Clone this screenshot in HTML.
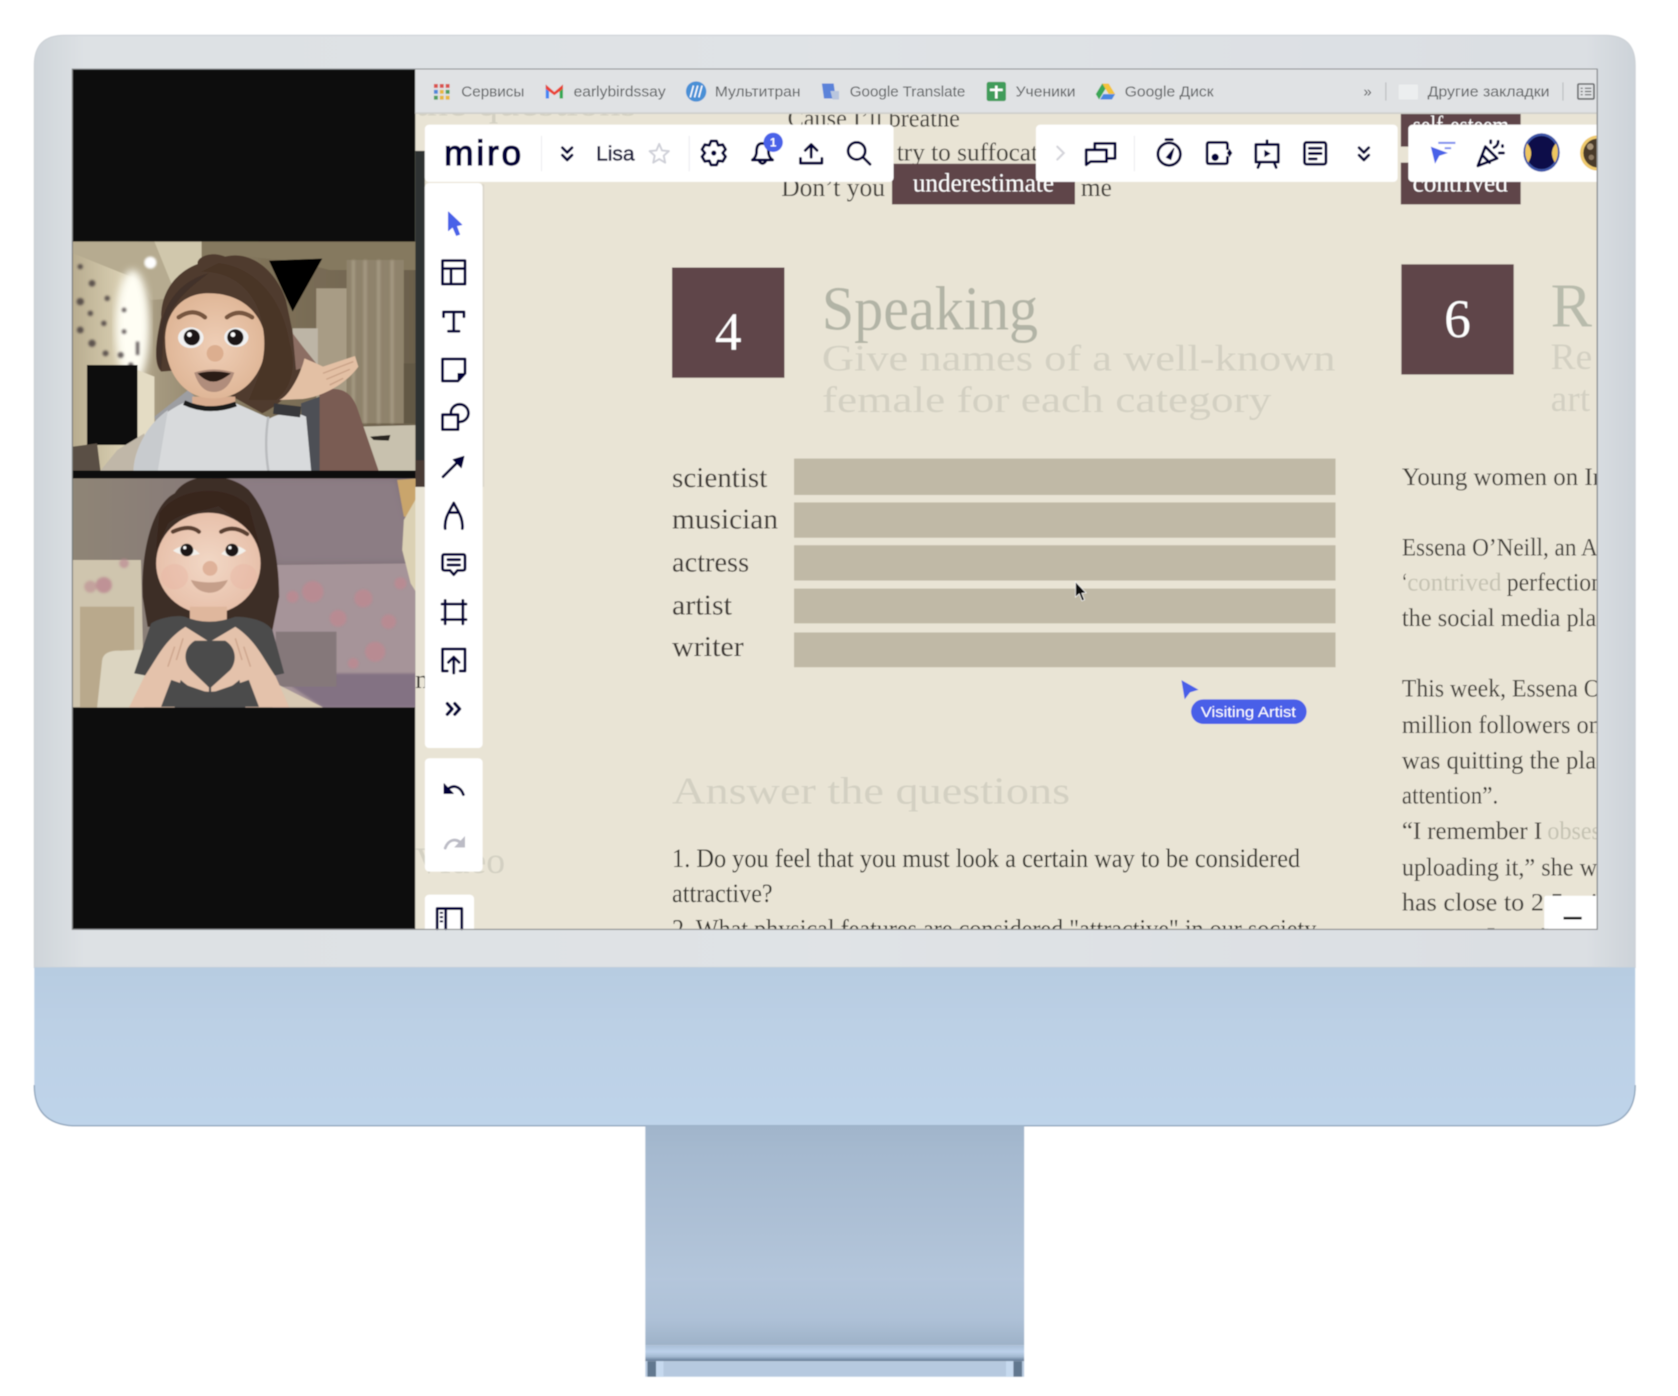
<!DOCTYPE html>
<html lang="en"><head><meta charset="utf-8"><title>Miro lesson on iMac</title>
<style>
html,body{margin:0;padding:0;background:#fff;width:1678px;height:1396px;overflow:hidden}
svg{display:block}
.s{font-family:"Liberation Serif",serif}
.a{font-family:"Liberation Sans","Noto Sans CJK SC",sans-serif}
.bm{font-size:14px;fill:#5c5e60}
.lab{font-size:27px;fill:#3c3934}
.body{font-size:24px;fill:#403d38}
.hl{font-size:35px;fill:#d3d0c2}
.ic{fill:none;stroke:#050038;stroke-width:2.6;stroke-linecap:round;stroke-linejoin:round}
</style></head><body>
<svg xmlns="http://www.w3.org/2000/svg" width="1678" height="1396" viewBox="0 0 1568 1304.5">
<defs>
<linearGradient id="bez" x1="0" x2="1" y1="0" y2="0"><stop offset="0" stop-color="#cfd5da"/><stop offset=".03" stop-color="#dde1e4"/><stop offset=".5" stop-color="#e0e3e6"/><stop offset=".97" stop-color="#dbdfe3"/><stop offset="1" stop-color="#cdd3d9"/></linearGradient>
<linearGradient id="chin" x1="0" x2="0" y1="0" y2="1"><stop offset="0" stop-color="#b7cce1"/><stop offset=".35" stop-color="#bcd0e5"/><stop offset="1" stop-color="#bfd4ea"/></linearGradient>
<linearGradient id="stand" x1="0" x2="0" y1="0" y2="1"><stop offset="0" stop-color="#a1b5cb"/><stop offset=".1" stop-color="#a5b9cf"/><stop offset=".7" stop-color="#b4c6db"/><stop offset=".88" stop-color="#aec1d7"/><stop offset="1" stop-color="#9eb2c8"/></linearGradient>
<linearGradient id="foot" x1="0" x2="0" y1="0" y2="1"><stop offset="0" stop-color="#a9bed6"/><stop offset=".4" stop-color="#bcd1ea"/><stop offset=".7" stop-color="#a5bbd3"/><stop offset="1" stop-color="#5f7690"/></linearGradient>
<linearGradient id="wall" x1="0" x2="1" y1="0" y2="0"><stop offset="0" stop-color="#b9ad90"/><stop offset=".14" stop-color="#d9cfb2"/><stop offset=".24" stop-color="#a69a80"/><stop offset=".55" stop-color="#7f7259"/><stop offset="1" stop-color="#6b5f4c"/></linearGradient>
<linearGradient id="wp2" x1="0" x2="1" y1="0" y2="0"><stop offset="0" stop-color="#8f8576"/><stop offset=".5" stop-color="#85777a"/><stop offset="1" stop-color="#7b6c76"/></linearGradient>
<radialGradient id="skin"><stop offset="0" stop-color="#efcfb7"/><stop offset="1" stop-color="#e0b798"/></radialGradient>
<radialGradient id="skin2"><stop offset="0" stop-color="#f2d8c6"/><stop offset="1" stop-color="#e8c1ab"/></radialGradient>
<filter id="b1"><feGaussianBlur stdDeviation="3"/></filter>
<filter id="b2"><feGaussianBlur stdDeviation="12"/></filter>
<filter id="soft" x="0" y="0" width="100%" height="100%"><feGaussianBlur stdDeviation=".45"/></filter>
<clipPath id="cv"><rect x="388" y="106" width="1104" height="762"/></clipPath>
<clipPath id="av"><rect x="1316" y="116" width="176" height="54"/></clipPath>
<clipPath id="v1"><rect x="38" y="35" width="1016" height="687"/></clipPath>
<clipPath id="v2"><rect x="38" y="745" width="1016" height="687"/></clipPath>
</defs>
<g filter="url(#soft)">
<rect width="1568" height="1304.5" fill="#fff"/>
<!-- monitor -->
<path d="M60 33H1500Q1528 33 1528 61V904H32V61Q32 33 60 33Z" fill="url(#bez)" stroke="#cdd2d7" stroke-width="1"/>
<path d="M32 904H1528V1014Q1528 1050 1492 1052H68Q32 1050 32 1014Z" fill="url(#chin)"/>
<path d="M32 1014Q32 1050 68 1052H1492Q1528 1050 1528 1014" fill="none" stroke="#93a8bf" stroke-width="1.3"/>
<rect x="603" y="1052" width="354" height="205" fill="url(#stand)"/>
<rect x="603" y="1257" width="354" height="15" fill="url(#foot)"/>
<rect x="603" y="1272" width="354" height="14.5" fill="#b6c9df"/>
<rect x="605" y="1272" width="8" height="14.5" fill="#62788f"/><rect x="613" y="1272" width="7" height="14.5" fill="#c6d9ee"/>
<rect x="940" y="1272" width="7" height="14.5" fill="#c6d9ee"/><rect x="947" y="1272" width="8" height="14.5" fill="#62788f"/>

<!-- screen -->
<rect x="67.5" y="64.5" width="1425" height="804" fill="#e9e4d5" stroke="#8a8d90" stroke-width="1"/>
<rect x="68" y="65" width="320" height="803" fill="#111"/>
<rect x="388" y="141" width="9" height="314" fill="#2f3130"/>
<rect x="388" y="430" width="9" height="25" fill="#4a3a34"/>

<!-- videos -->
<g transform="translate(56.06 214.9) scale(.315 .3115)">
<g clip-path="url(#v1)">
<rect x="38" y="35" width="1027" height="687" fill="url(#wall)"/>
<path d="M420 35H1065V120H800L700 95 560 80 420 120Z" fill="#85795f"/>
<path d="M38 35H280L420 100 400 200 270 210 235 150 38 70Z" fill="#b6ab90"/>
<path d="M280 35H420V110L330 160Z" fill="#d0c7ac"/>
<ellipse cx="215" cy="290" rx="50" ry="170" fill="#fffef4" filter="url(#b2)"/>
<circle cx="268" cy="98" r="18" fill="#fff" filter="url(#b1)"/>
<path d="M620 92L778 86 690 245Z" fill="#030303"/>
<rect x="760" y="175" width="90" height="330" fill="#a89c85"/>
<rect x="850" y="90" width="170" height="490" fill="#8f836c"/>
<g stroke="#a59a83" stroke-width="10" filter="url(#b1)"><path d="M870 90V580M905 90V580M945 90V580M985 90V580"/></g>
<rect x="1020" y="400" width="45" height="180" fill="#625845"/>
<rect x="690" y="295" width="75" height="120" fill="#bdb5a6"/>
<path d="M885 590L1065 585V722H900Z" fill="#c8c1ae"/>
<path d="M920 620L980 615 975 632 930 630Z" fill="#2a2622"/>
<g fill="#3a3034" filter="url(#b1)" opacity=".75">
<circle cx="60" cy="110" r="8"/><circle cx="95" cy="160" r="10"/><circle cx="140" cy="205" r="8"/><circle cx="190" cy="240" r="7"/><circle cx="60" cy="215" r="11"/><circle cx="90" cy="250" r="8"/><circle cx="130" cy="280" r="8"/><circle cx="190" cy="305" r="7"/><circle cx="60" cy="300" r="10"/><circle cx="95" cy="340" r="11"/><circle cx="135" cy="370" r="9"/><circle cx="180" cy="375" r="9"/><rect x="225" y="335" width="10" height="40"/><circle cx="210" cy="405" r="8"/>
</g>
<rect x="80" y="405" width="150" height="240" fill="#0f0d0f"/>
<path d="M230 420L280 440V620L230 640Z" fill="#e4dcc4"/>
<path d="M38 650L110 640 120 722H38Z" fill="#5a5045"/>
<path d="M120 722L170 660 250 610 260 722Z" fill="#c0b7a8"/>
<path d="M280 560L380 480 420 520 300 640Z" fill="#9d9ea2"/>
<path d="M770 480C830 470 860 480 880 530L945 722H760Z" fill="#7a5c52"/>
<path d="M715 520L770 500 770 722 720 722Z" fill="#4d4f55"/>
<path d="M300 262C300 170 360 120 408 102C405 80 450 62 490 80C565 60 640 120 670 210C680 260 690 300 700 360C725 400 712 450 690 480C660 510 640 530 600 550L530 510 360 420 300 425C275 400 285 330 300 262Z" fill="#4f3a2d"/>
<path d="M690 310L720 350 760 400 700 420Z" fill="#8c6e63"/>
<path d="M392 500H520V540H392Z" fill="#d9ad90"/>
<path d="M218 722C222 640 275 560 368 518Q440 545 522 520L622 565C660 545 700 545 730 560L745 722Z" fill="#d8dadc"/>
<path d="M218 722C225 640 265 580 320 540L290 722Z" fill="#c8cbce"/>
<path d="M618 560Q605 640 618 722" stroke="#b9bbbe" stroke-width="7" fill="none"/>
<path d="M368 518Q440 552 522 522" fill="none" stroke="#1a1a1c" stroke-width="15"/>
<path d="M635 520L715 530 712 562 632 552Z" fill="#38393b"/>
<path d="M312 330C312 250 360 190 440 190C540 190 600 250 610 330C612 430 540 510 450 505C370 505 312 430 312 330Z" fill="url(#skin)"/>
<path d="M420 125C520 125 590 190 603 300C615 380 590 440 560 510L640 510C690 470 700 400 680 340C660 200 570 110 470 100Z" fill="#4a3528"/>
<path d="M300 280C320 200 370 150 440 130C390 170 330 210 308 300L300 420C280 390 285 340 300 280Z" fill="#42302a"/>
<path d="M352 262Q395 232 430 262" fill="none" stroke="#77573f" stroke-width="13" stroke-linecap="round"/>
<path d="M495 262Q530 235 570 262" fill="none" stroke="#77573f" stroke-width="13" stroke-linecap="round"/>
<ellipse cx="388" cy="323" rx="38" ry="31" fill="#f1f1f1"/><ellipse cx="523" cy="322" rx="36" ry="29" fill="#f1f1f1"/>
<circle cx="391" cy="322" r="24" fill="#1b1513"/><circle cx="520" cy="322" r="24" fill="#1b1513"/>
<circle cx="384" cy="314" r="7" fill="#fff"/><circle cx="513" cy="314" r="7" fill="#fff"/>
<circle cx="460" cy="370" r="25" fill="#dcae8f"/>
<path d="M398 428Q455 408 517 428Q498 487 455 486Q416 486 398 428Z" fill="#b08d7b"/>
<path d="M408 430Q455 418 507 430Q475 455 455 455Q432 455 408 430Z" fill="#2a1c18"/>
<path d="M650 510C680 500 715 430 725 385L760 400 780 410 875 378 885 410C850 460 780 500 720 507Z" fill="#e3c0a4"/>
<g stroke="#c9a287" stroke-width="4" fill="none"><path d="M780 430L870 395M790 448L860 418M800 465L840 445"/></g>
</g>
<rect x="38" y="722" width="1016" height="23" fill="#111"/>
<g clip-path="url(#v2)">
<rect x="38" y="745" width="1027" height="687" fill="url(#wp2)"/>
<path d="M500 745H1000L1065 1000H640Z" fill="#8c7d84" filter="url(#b2)"/>
<path d="M38 990L240 990 250 1432H38Z" fill="#cfc5ae"/>
<path d="M630 1005L1065 1000 1065 1432H630Z" fill="#a69499"/>
<path d="M630 1330H1065V1432H780Z" fill="#6d5d76" opacity=".6" filter="url(#b1)"/>
<g fill="#bc8a92" filter="url(#b1)" opacity=".85"><circle cx="90" cy="1070" r="18" opacity=".7"/><circle cx="130" cy="1065" r="24"/><circle cx="190" cy="1000" r="14" opacity=".8"/><circle cx="750" cy="1085" r="32"/><circle cx="900" cy="1105" r="27"/><circle cx="825" cy="1165" r="25"/><circle cx="935" cy="1265" r="30"/><circle cx="975" cy="1175" r="22"/><circle cx="690" cy="1100" r="18"/><circle cx="870" cy="1300" r="16"/><circle cx="1010" cy="1060" r="18"/></g>
<path d="M1000 750L1065 745V860L1020 860Z" fill="#c9a56c"/>
<path d="M1020 870L1065 790 1065 1100 1040 1060 1015 960Z" fill="#dbd1b4"/>
<rect x="60" y="1130" width="160" height="302" fill="#b9a98c"/>
<path d="M110 1432L125 1290Q130 1260 180 1262L260 1258 300 1432Z" fill="#dcd5c1"/>
<rect x="640" y="1205" width="180" height="165" fill="#85787a"/>
<path d="M640 1360L780 1432H620Z" fill="#d8c9b3"/>
<path d="M245 1100C240 950 280 820 340 790C380 725 500 725 560 780C620 850 650 970 650 1100L630 1200 260 1190Z" fill="#3e2d25"/>
<ellipse cx="440" cy="1000" rx="155" ry="152" fill="url(#skin2)"/>
<ellipse cx="340" cy="1040" rx="40" ry="38" fill="#e9b6a3" opacity=".45"/><ellipse cx="545" cy="1040" rx="40" ry="38" fill="#e9b6a3" opacity=".45"/>
<path d="M295 850C350 770 500 760 560 830L595 960C570 890 510 860 470 828C420 845 360 845 320 880L285 960Z" fill="#37271f"/>
<rect x="385" y="1130" width="110" height="50" fill="#dfb79d"/>
<path d="M335 905Q385 882 412 905M478 905Q515 884 555 912" fill="none" stroke="#5a3f31" stroke-width="12" stroke-linecap="round"/>
<path d="M335 962Q375 930 415 972Q370 985 335 962ZM478 972Q515 930 552 962Q515 990 478 972Z" fill="#f3f1ec"/>
<circle cx="376" cy="960" r="19" fill="#1a1412"/><circle cx="510" cy="960" r="19" fill="#1a1412"/>
<circle cx="370" cy="953" r="5" fill="#fff"/><circle cx="504" cy="953" r="5" fill="#fff"/>
<circle cx="445" cy="1015" r="22" fill="#dfb29a"/>
<path d="M388 1050Q445 1065 498 1050Q480 1088 445 1088Q405 1088 388 1050Z" fill="#c59f8a"/>
<path d="M270 1180C300 1160 350 1155 370 1160Q440 1190 520 1160C560 1160 610 1170 630 1200L665 1330 600 1345 590 1432H310L300 1345 220 1330Z" fill="#4b4b4c"/>
<path d="M205 1432L250 1340C290 1280 310 1230 372 1190L438 1232 400 1232C370 1250 362 1290 388 1320L442 1372V1385C400 1385 380 1370 358 1350L340 1432Z" fill="#e4c2ab"/>
<path d="M680 1432L640 1340C600 1280 580 1230 520 1190L450 1232 490 1232C520 1250 528 1290 505 1320L448 1372V1385C490 1385 510 1370 532 1350L550 1432Z" fill="#e4c2ab"/>
<path d="M320 1430H300L330 1350 445 1390 560 1350 590 1430Z" fill="#4b4b4c"/>
<g stroke="#cda58d" stroke-width="4" fill="none"><path d="M340 1250L320 1310M365 1225L345 1290M545 1250L565 1310M520 1225L540 1290"/></g>
</g>
</g>

<!-- canvas content -->
<g clip-path="url(#cv)">
<rect x="397" y="106" width="1095" height="762" fill="#e9e4d5"/>
<rect x="388" y="455" width="9" height="413" fill="#e9e4d5"/>
<text x="595" y="108" text-anchor="end" class="s hl" textLength="207" lengthAdjust="spacingAndGlyphs">the questions</text>
<text x="736" y="118" class="s" font-size="24" fill="#403d38" textLength="161" lengthAdjust="spacingAndGlyphs">Cause I’ll breathe</text>
<text x="838" y="150" class="s" font-size="24" fill="#403d38" textLength="132" lengthAdjust="spacingAndGlyphs">try to suffocat</text>
<text x="730" y="183" class="s" font-size="25" fill="#403d38" textLength="97" lengthAdjust="spacingAndGlyphs">Don’t you</text>
<text x="1010" y="183" class="s" font-size="25" fill="#403d38" textLength="29" lengthAdjust="spacingAndGlyphs">me</text>
<rect x="833.5" y="153" width="171" height="38" fill="#5e454a"/>
<text x="853" y="179" class="s" font-size="25" fill="#fff" textLength="132" lengthAdjust="spacingAndGlyphs">underestimate</text>
<rect x="1309" y="100" width="112" height="37" fill="#5e454a"/>
<text x="1320" y="125" class="s" font-size="25" fill="#fff" textLength="90" lengthAdjust="spacingAndGlyphs">self-esteem</text>
<rect x="1309" y="152" width="112" height="39" fill="#5e454a"/>
<text x="1320" y="179" class="s" font-size="25" fill="#fff" textLength="89" lengthAdjust="spacingAndGlyphs">contrived</text>

<rect x="628" y="250" width="105" height="103" fill="#5e454a"/>
<text x="680.5" y="327" text-anchor="middle" class="s" font-size="50" fill="#fff">4</text>
<text x="768" y="308" class="s" font-size="58" fill="#b2b4a6" textLength="202" lengthAdjust="spacingAndGlyphs">Speaking</text>
<text x="768" y="346" class="s hl" textLength="480" lengthAdjust="spacingAndGlyphs">Give names of a well-known</text>
<text x="768" y="385" class="s hl" textLength="420" lengthAdjust="spacingAndGlyphs">female for each category</text>
<g fill="#c0b9a6">
<rect x="742" y="428.5" width="506" height="34"/><rect x="742" y="469.5" width="506" height="33"/><rect x="742" y="509.5" width="506" height="33"/><rect x="742" y="550" width="506" height="32.5"/><rect x="742" y="591" width="506" height="32.5"/>
</g>
<text x="628" y="455" class="s lab" textLength="89" lengthAdjust="spacingAndGlyphs">scientist</text>
<text x="628" y="494" class="s lab" textLength="99" lengthAdjust="spacingAndGlyphs">musician</text>
<text x="628" y="534" class="s lab" textLength="72" lengthAdjust="spacingAndGlyphs">actress</text>
<text x="628" y="574" class="s lab" textLength="56" lengthAdjust="spacingAndGlyphs">artist</text>
<text x="628" y="613" class="s lab" textLength="67" lengthAdjust="spacingAndGlyphs">writer</text>

<text x="628" y="751" class="s" font-size="36" fill="#d3d0c2" textLength="372" lengthAdjust="spacingAndGlyphs">Answer the questions</text>
<text x="628" y="810" class="s" font-size="25" fill="#33302b" textLength="587" lengthAdjust="spacingAndGlyphs">1. Do you feel that you must look a certain way to be considered</text>
<text x="628" y="843" class="s" font-size="25" fill="#33302b" textLength="94" lengthAdjust="spacingAndGlyphs">attractive?</text>
<text x="628" y="876" class="s" font-size="25" fill="#33302b" textLength="602" lengthAdjust="spacingAndGlyphs">2. What physical features are considered "attractive" in our society</text>

<text x="388" y="643" class="s" font-size="25" fill="#403d38">n</text>
<text x="388" y="816" class="s" font-size="35" fill="#d3d0c2" textLength="84" lengthAdjust="spacingAndGlyphs">Video</text>

<rect x="1309.5" y="247" width="105" height="103" fill="#5e454a"/>
<text x="1362" y="315" text-anchor="middle" class="s" font-size="50" fill="#fff">6</text>
<text x="1449" y="305" class="s" font-size="58" fill="#b8bbac">R</text>
<text x="1449" y="345" class="s hl">Re</text>
<text x="1449" y="384" class="s hl">art</text>
<text x="1310" y="453" class="s body" textLength="190" lengthAdjust="spacingAndGlyphs">Young women on In</text>
<text x="1310" y="519" class="s body" textLength="183" lengthAdjust="spacingAndGlyphs">Essena O’Neill, an A</text>
<text x="1310" y="552" class="s body" textLength="5" lengthAdjust="spacingAndGlyphs">‘</text>
<text x="1315" y="552" class="s body" style="fill:#c5c2b2" textLength="88" lengthAdjust="spacingAndGlyphs">contrived</text>
<text x="1408" y="552" class="s body" textLength="90" lengthAdjust="spacingAndGlyphs">perfection</text>
<text x="1310" y="585" class="s body" textLength="188" lengthAdjust="spacingAndGlyphs">the social media plat</text>
<text x="1310" y="651" class="s body" textLength="186" lengthAdjust="spacingAndGlyphs">This week, Essena O</text>
<text x="1310" y="685" class="s body" textLength="186" lengthAdjust="spacingAndGlyphs">million followers on</text>
<text x="1310" y="718" class="s body" textLength="188" lengthAdjust="spacingAndGlyphs">was quitting the plat</text>
<text x="1310" y="751" class="s body" textLength="90" lengthAdjust="spacingAndGlyphs">attention”.</text>
<text x="1310" y="784" class="s body" textLength="131" lengthAdjust="spacingAndGlyphs">“I remember I</text>
<text x="1446" y="784" class="s body" style="fill:#c5c2b2" textLength="50" lengthAdjust="spacingAndGlyphs">obses</text>
<text x="1310" y="818" class="s body" textLength="190" lengthAdjust="spacingAndGlyphs">uploading it,” she wr</text>
<text x="1310" y="851" class="s body" textLength="190" lengthAdjust="spacingAndGlyphs">has close to 2,5 mil</text>
<text x="1310" y="884" class="s body" textLength="180" lengthAdjust="spacingAndGlyphs">people that</text>

<!-- cursors -->
<path d="M1005 543.5V558L1008.5 555 1011 561.5 1013.5 560.5 1011 554.5 1015 554Z" fill="#111" stroke="#fff" stroke-width=".6"/>
<path d="M1104 635.5L1120 644.5 1112 647 1107 653.5Z" fill="#4a5fe8"/>
<rect x="1113" y="653.5" width="108" height="23" rx="11.5" fill="#4a5fe8"/>
<text x="1122" y="670" class="a" font-size="14" fill="#fff" textLength="89" lengthAdjust="spacingAndGlyphs">Visiting Artist</text>

<!-- panels -->
<g fill="#fff">
<rect x="397" y="116.5" width="438" height="53.5" rx="4"/>
<rect x="968" y="116.5" width="338" height="53.5" rx="4"/>
<rect x="1316" y="116.5" width="190" height="53.5" rx="4"/>
<rect x="450" y="172" width="2.5" height="283" fill="#dcd7ca"/>
<rect x="397" y="171" width="54" height="528" rx="4"/>
<rect x="397" y="708.5" width="54" height="106" rx="4"/>
<rect x="397" y="836" width="46" height="40" rx="4"/>
<rect x="1443" y="837" width="60" height="40" rx="2"/>
</g>
</g>

<!-- bookmarks bar -->
<rect x="388" y="65" width="1104" height="41" fill="#e0e2e4"/>
<rect x="388" y="105" width="1104" height="1.5" fill="#cfcfcb"/>
<g>
<g><rect x="405.5" y="78.5" width="3.6" height="3.6" fill="#d9534f"/><rect x="411" y="78.5" width="3.6" height="3.6" fill="#d9534f"/><rect x="416.5" y="78.5" width="3.6" height="3.6" fill="#d9534f"/><rect x="405.5" y="84" width="3.6" height="3.6" fill="#4f86d9"/><rect x="411" y="84" width="3.6" height="3.6" fill="#e8b63e"/><rect x="416.5" y="84" width="3.6" height="3.6" fill="#4f9d5f"/><rect x="405.5" y="89.5" width="3.6" height="3.6" fill="#4f9d5f"/><rect x="411" y="89.5" width="3.6" height="3.6" fill="#e8b63e"/><rect x="416.5" y="89.5" width="3.6" height="3.6" fill="#e8b63e"/></g>
<text x="431" y="90" class="a bm" textLength="59" lengthAdjust="spacingAndGlyphs">Сервисы</text>
<path d="M510 79V92H513V84Z" fill="#4285f4"/><path d="M526 79V92H523V84Z" fill="#34a853"/><path d="M510 79L518 86 526 79 526 83 518 89 510 83Z" fill="#ea4335"/>
<text x="536" y="90" class="a bm" textLength="86" lengthAdjust="spacingAndGlyphs">earlybirdssay</text>
<circle cx="650.5" cy="85.5" r="9.5" fill="#4a90d6"/><path d="M645 91L648 80M649 91L652 80M653 91L656 80" stroke="#fff" stroke-width="1.4" fill="none"/>
<text x="668" y="90" class="a bm" textLength="80" lengthAdjust="spacingAndGlyphs">Мультитран</text>
<path d="M768 78H779L781 92H770Z" fill="#5b83d9"/><path d="M776 85H784V93H778Z" fill="#b9c6de"/>
<text x="794" y="90" class="a bm" textLength="108" lengthAdjust="spacingAndGlyphs">Google Translate</text>
<rect x="922" y="76.5" width="18" height="18" rx="2" fill="#3f9c5a"/><path d="M925 84H937M931 80V92" stroke="#fff" stroke-width="2.4"/>
<text x="949" y="90" class="a bm" textLength="56" lengthAdjust="spacingAndGlyphs">Ученики</text>
<path d="M1030 78H1036L1030 88 1027 93 1024 88Z" fill="#3aa757"/><path d="M1030 78H1036L1042 88H1036Z" fill="#f3c33b"/><path d="M1028 93L1031 88H1042L1039 93Z" fill="#4a86e0"/>
<text x="1051" y="90" class="a bm" textLength="83" lengthAdjust="spacingAndGlyphs">Google Диск</text>
<text x="1274" y="90" class="a" font-size="14" fill="#55575a">»</text>
<rect x="1294.5" y="77" width="1" height="17" fill="#b9bbbd"/>
<rect x="1307" y="79" width="18" height="14" rx="1" fill="#eceeef"/>
<text x="1334" y="90" class="a bm" textLength="114" lengthAdjust="spacingAndGlyphs">Другие закладки</text>
<rect x="1460" y="77" width="1" height="17" fill="#b9bbbd"/>
<rect x="1474.5" y="78.5" width="15" height="14" rx="1" fill="none" stroke="#66686a" stroke-width="1.5"/>
<path d="M1477 82.5H1479M1481 82.5H1487M1477 85.5H1479M1481 85.5H1487M1477 88.5H1479M1481 88.5H1487" stroke="#66686a" stroke-width="1.1"/>
</g>

<!-- top toolbar -->
<text x="415" y="154" class="a" font-size="33" fill="#050038" stroke="#050038" stroke-width="1.1" textLength="72">miro</text>
<g stroke="#ececf0" stroke-width="1"><path d="M506 127V160M644 127V160M1060 127V160"/></g>
<path class="ic" d="M525.5 138L530 142.5 534.5 138M525.5 145L530 149.5 534.5 145"/>
<text x="557" y="150" class="a" font-size="19" fill="#1c1b3d" stroke="#1c1b3d" stroke-width=".5" textLength="36" lengthAdjust="spacingAndGlyphs">Lisa</text>
<path d="M616 134.5L618.6 140.6 625 141.2 620.2 145.5 621.6 152 616 148.6 610.4 152 611.8 145.5 607 141.2 613.4 140.6Z" fill="none" stroke="#cfd0d8" stroke-width="1.8" stroke-linejoin="round"/>
<path class="ic" transform="translate(667 143)" d="M-2.6-11.2L2.6-11.2 4.15-7.2 8.4-7.84 11-3.36 8.3 0 11 3.36 8.4 7.84 4.15 7.2 2.6 11.2-2.6 11.2-4.15 7.2-8.4 7.84-11 3.36-8.3 0-11-3.36-8.4-7.84-4.15-7.2Z"/><circle cx="667" cy="143" r="2.4" fill="#050038"/>
<path class="ic" d="M703 149.5Q707 147 707 141Q707 134 712.5 134Q718 134 718 141Q718 147 722 149.5ZM709 150Q712.5 155.5 716 150"/>
<circle cx="722.5" cy="133" r="9" fill="#4a62e8"/><text x="722.5" y="137" text-anchor="middle" class="a" font-size="11" font-weight="bold" fill="#fff">1</text>
<path class="ic" d="M758 147V135M752.5 140.5L758 135 763.5 140.5M748 148V152.5H768V148"/>
<circle class="ic" cx="800.5" cy="141" r="8"/><path class="ic" d="M806.5 147L813 153.5"/>
<path d="M988 137L994 143 988 149" fill="none" stroke="#d4d4da" stroke-width="2" stroke-linecap="round"/>
<path class="ic" d="M1023 139V134H1042V148H1034M1015 140H1034V151H1019L1015 154Z"/>
<circle class="ic" cx="1092.5" cy="144" r="10.5"/><path class="ic" d="M1089.5 130.5H1095.5"/><path d="M1090 147L1097 138.5 1094 149Z" fill="#050038" stroke="#050038"/>
<path class="ic" d="M1147 139V135Q1147 133 1145 133H1130Q1128 133 1128 135V151Q1128 153 1130 153H1145Q1147 153 1147 151V147"/><circle cx="1135.5" cy="147" r="3.4" fill="#050038"/><path d="M1149 139L1151.5 143 1149 147 1146.5 143Z" fill="#050038"/>
<path class="ic" d="M1173.5 135H1194.5V151.5H1173.5ZM1184 135V131.5M1177.5 151.5L1175.5 156.5M1190.5 151.5L1192.5 156.5"/><path d="M1181.5 140L1187.5 143.5 1181.5 147Z" fill="#050038"/>
<rect class="ic" x="1219" y="133" width="20" height="20.5" rx="2"/><path class="ic" d="M1223.5 138.5H1234.5M1223.5 143.5H1234.5M1223.5 148.5H1230"/>
<path class="ic" d="M1270 138L1274.5 142.5 1279 138M1270 145L1274.5 149.5 1279 145"/>
<path d="M1337 137L1353 143 1345 145.5 1341 153Z" fill="#4a62e8"/><path d="M1344 133.5H1360M1350 138.5H1356" stroke="#7a8cee" stroke-width="1.8" fill="none"/>
<path class="ic" d="M1381 155L1388 137 1399 148ZM1385 145L1392 152"/><path class="ic" d="M1396 138Q1400 136 1400 132M1401 143H1405M1393 133.5V131.5M1404 137V136"/>
<ellipse cx="1440.5" cy="142.5" rx="17" ry="18" fill="#3e55a8"/><ellipse cx="1440.5" cy="142.5" rx="14.5" ry="15.5" fill="#07104a"/>
<path d="M1427 134Q1434 142 1428 152Q1423 143 1427 134ZM1454 134Q1447 142 1453 152Q1458 143 1454 134Z" fill="#efc661"/>
<g clip-path="url(#av)"><circle cx="1493" cy="143" r="16.5" fill="#eec96d"/><circle cx="1493" cy="143" r="13.5" fill="#4a3a2c"/><circle cx="1486" cy="137" r="3" fill="#a89478"/><circle cx="1487" cy="147" r="2.5" fill="#8d7a62"/></g>

<!-- left toolbar icons -->
<path d="M419 198L431.5 210 426.5 211 429.5 219 426.5 220 423 212 419 215.5Z" fill="#4a62e8" stroke="#4a62e8" stroke-width=".8" stroke-linejoin="round"/>
<path class="ic" d="M413.5 243.5H434.5V265.5H413.5ZM413.5 251H434.5M421.5 251V265.5"/>
<path class="ic" d="M414.5 296V291.5H433.5V296M424 291.5V309.5M419 309.5H429"/>
<path class="ic" d="M434.5 349V335.5H413.5V356H428Z"/><path d="M428 356L435 349H428Z" fill="#050038" stroke="#050038" stroke-linejoin="round"/>
<circle class="ic" cx="429.5" cy="386" r="8.2"/><rect class="ic" x="413.5" y="387.5" width="14.5" height="14" style="fill:#fff"/>
<path class="ic" d="M414 445.5L428 431.5"/><path d="M433.5 426.5L431 437 423.5 429.5Z" fill="#050038" stroke="#050038" stroke-linejoin="round"/>
<path class="ic" d="M416 494C415 484 420 478 424 470C428 478 433 484 432 494M420 479H428"/>
<path class="ic" d="M415.5 518H432.5Q434.5 518 434.5 520V531Q434.5 533 432.5 533H427.5L424 537 420.5 533H415.5Q413.5 533 413.5 531V520Q413.5 518 415.5 518ZM418.5 523H429.5M418.5 528H429.5"/>
<path class="ic" d="M416 561V583M432.5 561V583M413 564.5H435.5M413 579H435.5"/>
<path class="ic" d="M418 627H413.5V606.5H434.5V627H430M424 629V614M419 619L424 614 429 619"/>
<path class="ic" stroke-width="3" style="stroke-width:3" d="M418 657.5L422.5 662.5 418 667.5M425 657.5L429.5 662.5 425 667.5"/>
<path class="ic" d="M433 742.5C430 734.5 423 732.5 417.5 738.5"/><path d="M415 732.5V741.5H423.5Z" fill="#050038" stroke="#050038" stroke-linejoin="round"/>
<path d="M416 792.5C419 784.5 426 782.5 431.5 788.5" fill="none" stroke="#bcbcc6" stroke-width="2.6" stroke-linecap="round"/><path d="M434 782.5V791.5H425.5Z" fill="#bcbcc6" stroke="#bcbcc6"/>
<path class="ic" d="M408.5 868V849H431.5V868M416.5 849V868"/><path d="M411 853H414M411 857H414M411 861H414" stroke="#050038" stroke-width="1.8"/>
<path d="M1461 858H1478" stroke="#111" stroke-width="2.4"/>

<!-- screen edge -->
<path d="M1492.5 65V868.5M68 868.5H1492.5" stroke="#8a8d90" stroke-width="1" fill="none"/>
</g>
</svg>
</body></html>
